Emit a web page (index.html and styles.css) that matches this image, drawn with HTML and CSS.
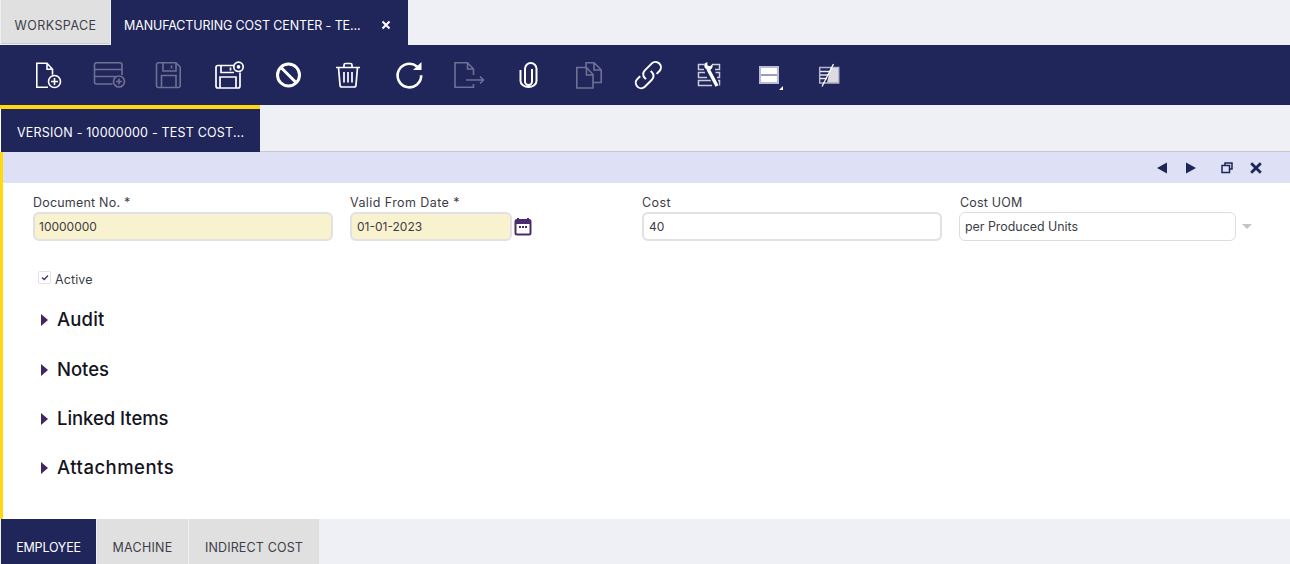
FILE: index.html
```html
<!DOCTYPE html>
<html lang="en">
<head>
<meta charset="utf-8">
<title>Manufacturing Cost Center</title>
<link rel="stylesheet" href="styles.css">
</head>
<body>
<div class="page">
  <nav class="main-tabs">
    <div class="main-tab workspace">WORKSPACE</div>
    <div class="main-tab active"><span>MANUFACTURING COST CENTER - TE...</span>
      <svg class="tab-close" width="10" height="10" viewBox="0 0 10 10"><path d="M1.500 1.500l7 7M8.500 1.500l-7 7" stroke="#fff" stroke-width="2"/></svg>
    </div>
  </nav>
  <div class="toolbar">
    <button class="tb"><svg width="30" height="30" viewBox="0 0 30 30" fill="none" stroke="#fff" stroke-width="1.600"><path d="M15 27.200H3.800V3.200H14l5.500 6v5.500M14 3.200V9.200h5.500"/><circle cx="21.500" cy="21.500" r="6" fill="#20255a"/><path d="M21.500 18v7M18 21.500h7"/></svg></button>
    <button class="tb dim"><svg width="30" height="30" viewBox="0 0 30 30" fill="none" stroke="#fff" stroke-width="1.600"><path d="M19.500 24H3.500A2 2 0 0 1 1.500 22V4.800A2 2 0 0 1 3.500 2.800h23.500a2 2 0 0 1 2 2V15M1.500 9.500H29M1.500 16.500H23"/><circle cx="26" cy="21.500" r="5.500" fill="#20255a"/><path d="M26 18.500v6M23 21.500h6"/></svg></button>
    <button class="tb dim"><svg width="30" height="30" viewBox="0 0 30 30" fill="none" stroke="#fff" stroke-width="1.600"><path d="M5.500 2.800h17.500l4.200 4.200V25.500a2 2 0 0 1-2 2H5.500a2 2 0 0 1-2-2V4.800a2 2 0 0 1 2-2zM10 3v8h13V3M18.500 5.500v3M8.500 27.500V15.500h14.500v12"/></svg></button>
    <button class="tb"><svg width="30" height="30" viewBox="0 0 30 30" fill="none" stroke="#fff" stroke-width="1.700"><path d="M21 5.500H5a2 2 0 0 0-2 2V26a2 2 0 0 0 2 2h20a2 2 0 0 0 2-2V12.500M8 5.500v7h13M17.500 7.500v3M7 28V17h16v11"/><circle cx="25.500" cy="6.800" r="4.700" fill="#20255a"/><circle cx="25.500" cy="6.800" r="1" fill="#fff"/></svg></button>
    <button class="tb"><svg width="30" height="30" viewBox="0 0 30 30" fill="none" stroke="#fff" stroke-width="3"><circle cx="15.500" cy="15" r="11"/><path d="M8 7.500l15 15"/></svg></button>
    <button class="tb"><svg width="30" height="30" viewBox="0 0 30 30" fill="none" stroke="#fff" stroke-width="1.700"><path d="M3 7.500h24M11 7.500V5a1.500 1.500 0 0 1 1.500-1.500h5A1.500 1.500 0 0 1 19 5v2.500M5.500 7.500l1.500 17.500a2 2 0 0 0 2 2h12a2 2 0 0 0 2-2l1.500-17.500M11 12v10.500M15 12v10.500M19 12v10.500"/></svg></button>
    <button class="tb"><svg width="30" height="30" viewBox="0 0 30 30" fill="none" stroke="#fff" stroke-width="2.600"><path d="M24 6.500a11.800 11.800 0 1 0 4.200 8.800"/><path d="M20 10h8.500V2z" fill="#fff" stroke="none"/></svg></button>
    <button class="tb dim"><svg width="30" height="30" viewBox="0 0 30 30" fill="none" stroke="#fff" stroke-width="1.600"><path d="M20.500 15V9L14.500 2.800H2V27.200h18.500V24M14.500 2.800V9h6M13 20h17M27 16.500l3.500 3.500-3.500 3.500"/></svg></button>
    <button class="tb"><svg width="30" height="30" viewBox="0 0 30 30" fill="none" stroke="#fff" stroke-width="2"><path d="M19 9V21.500a3.500 3.500 0 0 1-7 0V8.800a5.500 5.500 0 0 1 11.500 0V21a8 6 0 0 1-16 0V10"/></svg></button>
    <button class="tb dim"><svg width="30" height="30" viewBox="0 0 30 30" fill="none" stroke="#fff" stroke-width="1.600"><path d="M13 8.500V2.800h8l7.200 7V22.500H20.500M21 3v7h7M3.800 7.500H13.500l6.500 7V28H3.800zM13.500 8v7H20"/></svg></button>
    <button class="tb"><svg width="30" height="30" viewBox="0 0 30 30" fill="none" stroke="#fff" stroke-width="1.700"><g transform="translate(-2.200 -2.500) scale(1.170)"><path d="M13 18.500l-1-1a4.500 4.500 0 0 1 0-6.500l6-6a4.600 4.600 0 0 1 6.500 6.500L22 14"/><path d="M17 11.500l1 1a4.500 4.500 0 0 1 0 6.500l-6 6a4.600 4.600 0 0 1-6.500-6.500L8 16"/></g></svg></button>
    <button class="tb"><svg width="30" height="30" viewBox="0 0 30 30" fill="none" stroke="#c9ccdb" stroke-width="1.500"><path d="M11 4.500H5.500v5H11M19 4.500h7.500v5H22M12 12.500H5.500v5H14M22.500 12.500h4v5h-2.500M18 20.500H5.500v5H19M25 20.500h1.500v5"/><path d="M14.500 9l9.500 17" stroke="#20255a" stroke-width="5.500"/><path d="M15 9l9 17" stroke="#fff" stroke-width="3.400"/><path d="M11.500 3.500c-1 3 1 6.500 4.500 6.500 2.500 0 4.200-2.500 3.500-6l-2.500 2.200-2.500-.7-.2-3.500z" fill="#fff" stroke="none"/></svg></button>
    <button class="tb"><span class="corner-wrap"><svg width="20" height="18" viewBox="0 0 20 18"><rect x="1" y="1" width="18" height="16" fill="#fff" stroke="#b9bcd2" stroke-width="2"/><path d="M2 9h16" stroke="#9a9dbb" stroke-width="2"/></svg><i class="corner"></i></span></button>
    <button class="tb"><svg class="last-icon" width="22" height="24" viewBox="0 0 22 24"><rect x="1.700" y="4.500" width="19" height="15.500" fill="#20255a" stroke="#b4b7cc" stroke-width="1.500"/><path d="M2 8.500h10M2 12h9M2 15.500h7" stroke="#e4e5ee" stroke-width="1.400"/><path d="M12.500 5h7.500v14.500h-11z" fill="#dcdce0"/><path d="M4 23.500L15.500 1" stroke="#fff" stroke-width="1.300"/></svg></button>
  </div>
  <div class="sub-strip">
    <div class="sub-tab">VERSION - 10000000 - TEST COST...</div>
  </div>
  <main class="panel">
    <div class="panel-bar">
      <svg class="bar-icon" width="12" height="12" viewBox="0 0 12 12"><path d="M11 .5v11L1 6z" fill="#1f2657"/></svg>
      <svg class="bar-icon gap-next" width="12" height="12" viewBox="0 0 12 12"><path d="M1 .5v11L11 6z" fill="#1f2657"/></svg>
      <svg class="bar-icon gap-restore" width="12" height="12" viewBox="0 0 12 12" fill="none" stroke="#1f2657" stroke-width="1.500"><path d="M4 3V1h7v6H8.500"/><rect x="1" y="3.500" width="7.500" height="7"/></svg>
      <svg class="bar-icon gap-close" width="12" height="12" viewBox="0 0 12 12"><path d="M1.200 1.200l9.600 9.600M10.800 1.200l-9.600 9.600" stroke="#1f2657" stroke-width="2.800"/></svg>
    </div>
    <div class="form">
      <div class="row">
        <div class="field f-doc">
          <label>Document No. *</label>
          <div class="input req">10000000</div>
        </div>
        <div class="field f-date">
          <label class="wide">Valid From Date *</label>
          <div class="date-wrap">
            <div class="input req date">01-01-2023</div>
            <svg class="cal" width="18" height="19" viewBox="0 0 18 19"><path d="M4 1v3M14 1v3" stroke="#4a2c6e" stroke-width="2"/><rect x="1.500" y="3" width="15" height="14.500" rx="1.500" fill="#fff" stroke="#4a2c6e" stroke-width="2"/><rect x="1" y="3" width="16" height="4" fill="#4a2c6e"/><path d="M5 10h2M8 10h2M11 10h2" stroke="#4a2c6e" stroke-width="2"/></svg>
          </div>
        </div>
        <div class="field f-cost">
          <label class="wide">Cost</label>
          <div class="input cost">40</div>
        </div>
        <div class="field f-uom">
          <label class="shift">Cost UOM</label>
          <div class="date-wrap">
            <div class="input select">per Produced Units</div>
            <i class="caret"></i>
          </div>
        </div>
      </div>
      <div class="check-row">
        <span class="checkbox"><svg width="8" height="7" viewBox="0 0 8 7"><path d="M1 3.500L3.200 5.500 7 1.500" fill="none" stroke="#4a2c6e" stroke-width="1.300"/></svg></span>
        <span class="check-label">Active</span>
      </div>
      <section class="sec sec-audit"><i class="arrow"></i><h2>Audit</h2></section>
      <section class="sec sec-notes"><i class="arrow"></i><h2 class="tight">Notes</h2></section>
      <section class="sec"><i class="arrow"></i><h2 class="tight">Linked Items</h2></section>
      <section class="sec"><i class="arrow"></i><h2 class="loose">Attachments</h2></section>
    </div>
  </main>
  <div class="bottom-tabs">
    <div class="bottom-tab active t-emp">EMPLOYEE</div>
    <div class="bottom-tab t-mac">MACHINE</div>
    <div class="bottom-tab t-ind">INDIRECT COST</div>
  </div>
</div>
</body>
</html>
```
FILE: styles.css
```css
* { box-sizing: border-box; }
html, body { margin: 0; height: 100%; }
body { font-family: Inter, "Noto Sans", "Liberation Sans", sans-serif; color: #3c3c46; background: #fff; overflow: hidden; }
.page { width: 1290px; height: 564px; display: flex; flex-direction: column; }

.main-tabs { height: 45px; display: flex; background: #eff0f6; flex: none; padding-left: 1px; }
.main-tab { width: 109px; height: 44px; background: #e0e0e0; border-bottom: 1px solid #ccc; display: flex; align-items: center; justify-content: center; padding-top: 7px; font-size: 12.500px; color: #3e3e48; }
.workspace { letter-spacing: .45px; }
.main-tab.active { width: 297px; height: 45px; margin-left: 1px; padding-top: 5px; background: #20255a; border: 0; color: #fff; justify-content: flex-start; padding-left: 13px; gap: 21px; letter-spacing: -.12px; }
.tab-close { flex: none; }

.toolbar { height: 60px; background: #20255a; display: flex; align-items: center; padding-left: 18px; flex: none; }
.tb { width: 60px; height: 60px; padding: 0; border: 0; background: none; display: flex; align-items: center; justify-content: center; }
.tb svg { overflow: visible; }
.tb.dim svg { opacity: .35; }
.corner-wrap { position: relative; display: flex; margin-left: 1px; }
.corner { position: absolute; right: -4px; bottom: -6px; width: 0; height: 0; border-left: 4px solid transparent; border-bottom: 4px solid #fff; }
.last-icon { margin-left: 1px; }

.sub-strip { height: 47px; background: #eff0f6; border-bottom: 1px solid #c8c8d0; flex: none; }
.sub-tab { width: 260px; height: 47px; padding: 4px 0 0 17px; background: #20255a; border-top: 4px solid #ffd90f; color: #fff; font-size: 12.500px; letter-spacing: .2px; display: flex; align-items: center; box-shadow: inset 1px 0 0 #fff; }

.panel { height: 367px; border-left: 3px solid #ffd90f; display: flex; flex-direction: column; flex: none; }
.panel-bar { height: 31px; background: #dee0f6; display: flex; align-items: center; justify-content: flex-end; padding-right: 28px; flex: none; }
.gap-next { margin-left: 17px; }
.gap-restore { margin-left: 24px; }
.gap-close { margin-left: 17px; }

.form { padding: 12px 0 0 30px; }
.row { display: flex; }
.field { display: flex; flex-direction: column; }
.field label { font-size: 12.500px; line-height: 15px; color: #3c3c46; margin-bottom: 2px; letter-spacing: .2px; }
.field label.wide { letter-spacing: .42px; }
.field label.shift { padding-left: 1px; }
.f-doc { width: 317px; }
.f-date { width: 292px; }
.f-cost { width: 317px; }
.input { height: 29px; border-radius: 6px; font-size: 12px; display: flex; align-items: center; padding-left: 4px; color: #3c3c46; }
.req { background: #f9f2cf; border: 2px solid #e1e1e4; width: 300px; }
.req.date { width: 162px; padding-left: 5px; }
.cost { width: 300px; background: #fff; border: 2px solid #e1e1e4; padding-left: 5px; }
.select { width: 277px; background: #fff; border: 1px solid #dcdce2; padding-left: 5px; font-size: 12.400px; }
.date-wrap { display: flex; align-items: center; }
.cal { margin-left: 2px; }
.caret { margin-left: 6px; width: 0; height: 0; border-left: 5px solid transparent; border-right: 5px solid transparent; border-top: 5px solid #c4c4c8; }

.check-row { display: flex; align-items: center; margin: 30px 0 0 5px; height: 16px; }
.checkbox { width: 13px; height: 13px; border: 1px solid #e2e2e8; border-radius: 2px; display: flex; align-items: center; justify-content: center; margin-top: -3px; }
.check-label { font-size: 12.500px; margin-left: 4px; color: #3c3c46; letter-spacing: .1px; }

.sec { display: flex; align-items: center; height: 26px; margin-top: 23px; }
.sec-audit { margin-top: 19px; }
.sec-notes { margin-top: 24px; }
.arrow { margin: 2px 9px 0 8px; width: 0; height: 0; border-top: 6px solid transparent; border-bottom: 6px solid transparent; border-left: 7px solid #41265f; flex: none; }
.sec h2 { margin: 0; font-size: 18.500px; font-weight: 500; letter-spacing: .15px; color: #14141e; }
.sec h2.tight { letter-spacing: -.05px; }
.sec h2.loose { letter-spacing: .5px; }

.bottom-tabs { height: 45px; display: flex; background: #eff0f6; flex: none; padding-left: 1px; }
.bottom-tab { height: 45px; background: #e0e0e0; display: flex; align-items: center; justify-content: center; font-size: 12.500px; color: #3e3e48; padding-top: 12px; margin-right: 1px; }
.bottom-tab.active { background: #20255a; color: #fff; }
.t-emp { width: 95px; letter-spacing: -.2px; }
.t-mac { width: 91px; letter-spacing: .25px; }
.t-ind { width: 130px; letter-spacing: .15px; }
```
